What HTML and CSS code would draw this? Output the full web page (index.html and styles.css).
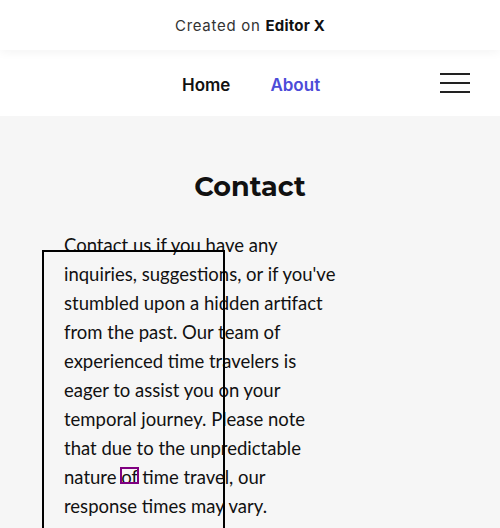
FILE: index.html
```html
<!DOCTYPE html>
<html>
<head>
<meta charset="utf-8">
<link rel="stylesheet" href="styles.css">
</head>
<body>
<div class="banner">Created on <b>Editor X</b></div>
<header class="nav">
  <nav class="links">
    <a class="link">Home</a>
    <a class="link active">About</a>
  </nav>
  <div class="burger"><span></span><span></span><span></span></div>
</header>
<main class="content">
  <h1 class="title">Contact</h1>
  <p class="text">Contact us if you have any inquiries, suggestions, or if you've stumbled upon a hidden artifact from the past. Our team of experienced time travelers is eager to assist you on your temporal journey. Please note that due to the unpredictable nature of time travel, our response times may vary.</p>
  <ul class="list"><li>Email</li></ul>
  <div class="frame"></div>
  <div class="marker"></div>
</main>
</body>
</html>
```
FILE: styles.css
```css
html, body { margin: 0; padding: 0; }
body { background: #f6f6f6; font-family: "Lato", sans-serif; width: 500px; height: 528px; overflow: hidden; position: relative; }
.banner { height: 50px; background: #fff; display: flex; align-items: center; justify-content: center; font-family: "Inter", "Liberation Sans", sans-serif; font-size: 15px; font-weight: 400; letter-spacing: 0.7px; color: #333; box-shadow: 0 2px 10px rgba(0,0,0,0.05); position: relative; z-index: 2; }
.banner b { color: #111; font-weight: 700; margin-left: 5px; letter-spacing: 0.2px; }
.nav { height: 66px; background: #fff; display: flex; align-items: center; position: relative; }
.links { display: flex; gap: 40px; margin-left: 182px; margin-top: 4px; }
.link { font-family: "Inter", sans-serif; font-weight: 600; font-size: 17px; color: #111; }
.link.active { color: #4c4cd8; }
.burger { margin-left: auto; margin-right: 30px; width: 30px; display: flex; flex-direction: column; gap: 7px; }
.burger span { height: 2px; background: #222; display: block; }
.content { position: relative; padding: 51px 0 0 64px; }
.title { margin: 0 0 0 -64px; text-align: center; font-family: "Montserrat", "Inter", sans-serif; font-weight: 700; font-size: 27px; line-height: 40px; color: #111; }
.text { margin: 24px 0 0; width: 272px; font-size: 18.5px; line-height: 29px; color: #111; }
.list { margin: 0; padding-left: 33px; font-size: 18.5px; line-height: 29px; list-style: none; }
.frame { position: absolute; left: 42px; top: 134px; width: 179px; height: 400px; border: 2px solid #000; }
.marker { position: absolute; left: 120px; top: 351px; width: 15px; height: 13px; border: 2px solid #800080; }
```
